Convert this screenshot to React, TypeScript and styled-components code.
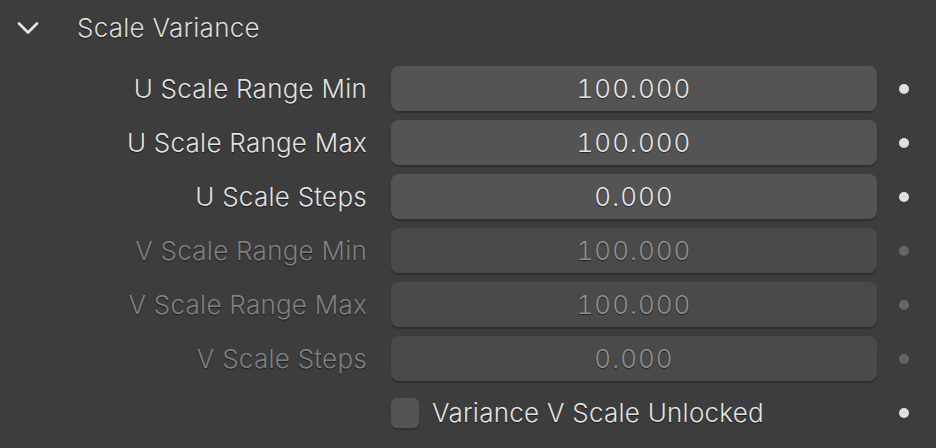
import { createGlobalStyle } from 'styled-components';
import styled from 'styled-components';

const GlobalStyle = createGlobalStyle`
  html, body {
    margin: 0;
    padding: 0;
    background: #3d3d3d;
  }
  body {
    font-family: Inter, "Noto Sans", "DejaVu Sans", sans-serif;
  }
`;

type Field = {
  label: string;
  value: string;
  disabled?: boolean;
};

const fields: Field[] = [
  { label: 'U Scale Range Min', value: '100.000' },
  { label: 'U Scale Range Max', value: '100.000' },
  { label: 'U Scale Steps', value: '0.000' },
  { label: 'V Scale Range Min', value: '100.000', disabled: true },
  { label: 'V Scale Range Max', value: '100.000', disabled: true },
  { label: 'V Scale Steps', value: '0.000', disabled: true },
];

const App = () => {
  return (
    <>
      <GlobalStyle />
      <Panel>
        <Header>
          <Chevron width="22" height="14" viewBox="0 0 22 14">
            <path
              d="M2 2.5L11 11.5L20 2.5"
              fill="none"
              stroke="#e6e6e6"
              strokeWidth="2.6"
              strokeLinecap="round"
              strokeLinejoin="round"
            />
          </Chevron>
          <Title>Scale Variance</Title>
        </Header>
        <Rows>
          {fields.map((f) => (
            <Row key={f.label}>
              <Label $disabled={f.disabled}>{f.label}</Label>
              <NumField $disabled={f.disabled}>{f.value}</NumField>
              <Dot $disabled={f.disabled} />
            </Row>
          ))}
          <Row>
            <span />
            <CheckRow>
              <CheckBox />
              <CheckLabel>Variance V Scale Unlocked</CheckLabel>
            </CheckRow>
            <Dot />
          </Row>
        </Rows>
      </Panel>
    </>
  );
};

export default App;

const Panel = styled.div`
  width: 936px;
  height: 448px;
  background: #3d3d3d;
  overflow: hidden;
`;

const Header = styled.div`
  height: 54px;
  display: flex;
  align-items: center;
`;

const Chevron = styled.svg`
  margin-left: 17px;
  margin-top: 2px;
`;

const Title = styled.div`
  margin-left: 38px;
  font-size: 26px;
  font-weight: 300;
  letter-spacing: 0.25px;
  color: #dcdcdc;
  text-shadow: 0 1px 1px rgba(0, 0, 0, 0.6);
`;

const Rows = styled.div`
  padding-top: 7.5px;
  display: flex;
  flex-direction: column;
`;

const Row = styled.div`
  height: 54px;
  display: grid;
  grid-template-columns: 367px 486px 1fr;
  column-gap: 24px;
  align-items: center;
`;

const Label = styled.div<{ $disabled?: boolean }>`
  text-align: right;
  font-size: 26px;
  font-weight: 300;
  letter-spacing: 0.25px;
  color: ${(p) => (p.$disabled ? '#818181' : '#e2e2e2')};
  text-shadow: 0 1px 1px rgba(0, 0, 0, 0.55);
  white-space: nowrap;
`;

const NumField = styled.div<{ $disabled?: boolean }>`
  height: 45px;
  border-radius: 8px;
  background: ${(p) => (p.$disabled ? '#4a4a4a' : '#545454')};
  box-shadow: 0 2px 1px rgba(0, 0, 0, 0.22);
  display: flex;
  align-items: center;
  justify-content: center;
  font-size: 26px;
  font-weight: 300;
  font-variant-numeric: tabular-nums;
  letter-spacing: 1px;
  color: ${(p) => (p.$disabled ? '#8f8f8f' : '#e6e6e6')};
  text-shadow: 0 1px 1px rgba(0, 0, 0, 0.55);
`;

const Dot = styled.div<{ $disabled?: boolean }>`
  width: 10px;
  height: 10px;
  border-radius: 50%;
  margin-left: -2px;
  background: ${(p) => (p.$disabled ? '#666666' : '#e0e0e0')};
`;

const CheckRow = styled.div`
  display: flex;
  align-items: center;
  gap: 13px;
`;

const CheckBox = styled.div`
  width: 28px;
  height: 30px;
  border-radius: 6px;
  background: #545454;
  box-shadow: 0 2px 1px rgba(0, 0, 0, 0.22);
`;

const CheckLabel = styled.div`
  font-size: 26px;
  font-weight: 300;
  letter-spacing: 0.25px;
  color: #e2e2e2;
  text-shadow: 0 1px 1px rgba(0, 0, 0, 0.55);
  white-space: nowrap;
`;
